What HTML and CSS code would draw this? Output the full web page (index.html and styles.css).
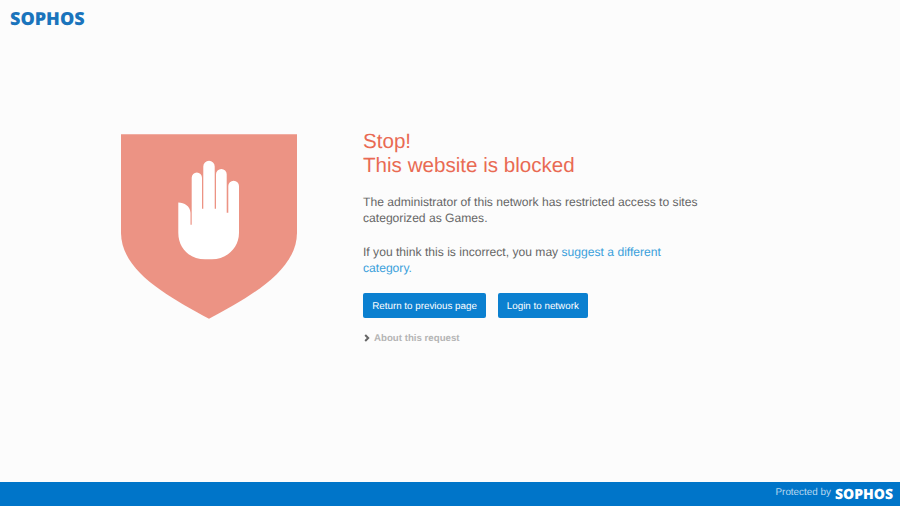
FILE: index.html
```html
<!DOCTYPE html>
<html lang="en">
<head>
<meta charset="utf-8">
<title>Stop! This website is blocked</title>
<link rel="stylesheet" href="styles.css">
</head>
<body>
<div class="page">
  <header class="top"><span class="logo">SOPHOS</span></header>
  <main class="main">
    <svg class="shield" viewBox="121 133.5 176 184.5" width="176" height="185" aria-hidden="true">
      <path class="shield-bg" d="M121 133.5H297V232C297 270 250 296 209 318C168 296 121 270 121 232Z"/>
      <path class="hand" d="M178.3 201.7C184.500 202 190 205 190.500 212V224H191.700V177A5.150 5.150 0 0 1 202 177V208H203.300V165.700A5.700 5.700 0 0 1 214.700 165.700V208H216V173.600A5.350 5.350 0 0 1 226.700 173.600V212H228.300V185.300A5.350 5.350 0 0 1 239 185.300V232C239 248 226 258.500 212 258.500H205C190 258.500 178.300 248 178.300 232Z"/>
    </svg>
    <section class="content">
      <h1 class="title">Stop!<br>This website is blocked</h1>
      <p class="text first">The administrator of this network has restricted access to sites categorized as Games.</p>
      <p class="text">If you think this is incorrect, you may <a class="link" href="#">suggest a different category.</a></p>
      <div class="actions">
        <a class="btn" href="#">Return to previous page</a>
        <a class="btn" href="#">Login to network</a>
      </div>
      <div class="about">
        <svg class="chev" viewBox="0 0 6 8" width="6" height="8" aria-hidden="true"><path d="M1.200 1L4.200 4L1.200 7"/></svg>
        <span>About this request</span>
      </div>
    </section>
  </main>
  <footer class="foot">
    <span class="prot">Protected by</span>
    <span class="logo logo-foot">SOPHOS</span>
  </footer>
</div>
</body>
</html>
```
FILE: styles.css
```css
* { box-sizing: border-box; }
html, body { margin: 0; height: 100%; }
body {
  background: #fcfcfc;
  font-family: "Liberation Sans", Arial, sans-serif;
  color: #666;
  overflow: hidden;
  text-rendering: geometricPrecision;
}
.page {
  height: 506px;
  display: flex;
  flex-direction: column;
}
.top {
  height: 134px;
  padding: 10px 0 0 10px;
  flex: none;
}
.logo {
  display: inline-block;
  font-family: "Open Sans", "Liberation Sans", sans-serif;
  font-weight: 800;
  font-size: 18px;
  line-height: 19px;
  color: #1a74bc;
}
.main {
  flex: 1;
  display: flex;
  align-items: flex-start;
  padding-left: 121px;
  gap: 66px;
}
.shield { flex: none; display: block; }
.shield-bg { fill: #ec9384; }
.hand { fill: #fff; }
.content {
  width: 345px;
  margin-top: -4px;
}
.title {
  margin: 0;
  font-size: 20.600px;
  line-height: 24px;
  font-weight: 400;
  color: #e96a53;
}
.text {
  margin: 17px 0 0;
  font-size: 12.120px;
  line-height: 16.500px;
}
.text.first { margin-top: 15.500px; }
.link { color: #3aa0db; text-decoration: none; }
.actions {
  display: flex;
  gap: 11.500px;
  margin-top: 16px;
}
.btn {
  height: 25px;
  padding: 2px 9.200px 0;
  display: flex;
  align-items: center;
  background: #0b80d0;
  border-radius: 2px;
  color: #fff;
  font-size: 9.820px;
  text-decoration: none;
}
.about {
  display: flex;
  align-items: center;
  gap: 4px;
  margin-top: 14px;
  padding-left: 1px;
  font-size: 9.700px;
  line-height: 13px;
  font-weight: 700;
  color: #b5b5b5;
}
.chev { fill: none; stroke: #666; stroke-width: 2; flex: none; }
.foot {
  flex: none;
  height: 24px;
  background: #0075c9;
  display: flex;
  justify-content: flex-end;
  align-items: center;
  gap: 4px;
  padding-right: 7px;
}
.prot {
  font-size: 9.900px;
  color: #b8d8f0;
  position: relative;
  top: -2px;
}
.logo-foot {
  color: #fff;
  font-size: 14px;
  line-height: 16px;
  position: relative;
  top: 1px;
}
```
